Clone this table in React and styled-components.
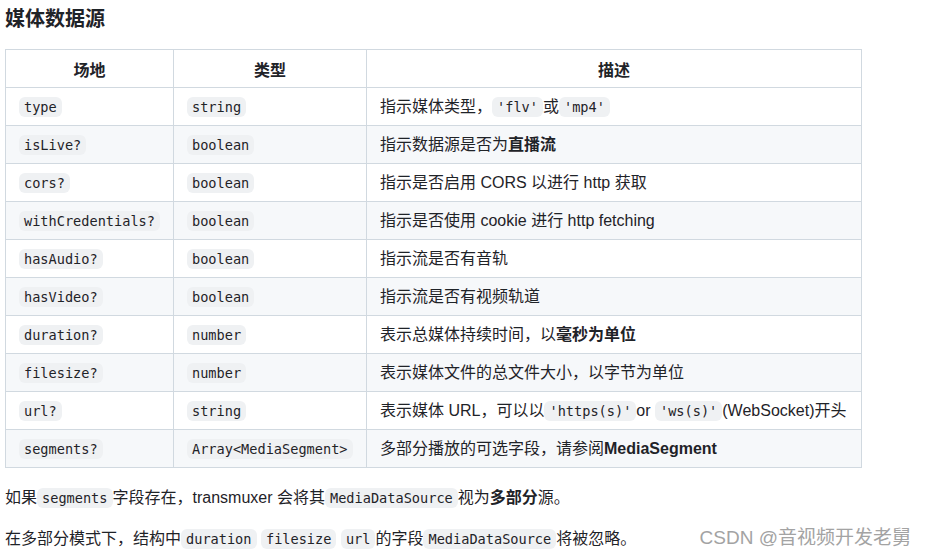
import React from 'react';
import styled, { createGlobalStyle } from 'styled-components';

const GlobalStyle = createGlobalStyle`
	body {
		margin: 0;
		background: #fff;
		color: #1f2328;
		font-family: "Liberation Sans", "Noto Sans CJK SC", sans-serif;
		font-size: 16px;
	}
`;

const Page = styled.div`
	position: relative;
	padding: 4px 5px 0;
	width: 925px;
	height: 557px;
	box-sizing: border-box;
	overflow: hidden;
`;

const Title = styled.h3`
	margin: 0 0 15px;
	font-size: 20px;
	line-height: 30px;
	font-weight: 700;
`;

const Table = styled.table`
	border-collapse: collapse;
	width: 857px;
	table-layout: fixed;
`;

const HeadCell = styled.th`
	border: 1px solid #d1d9e0;
	height: 37px;
	padding: 0 13px;
	font-weight: 700;
	text-align: center;
	background: #fff;
`;

const Row = styled.tr`
	background: ${(p) => (p.$odd ? '#f6f8fa' : '#fff')};
`;

const Cell = styled.td`
	border: 1px solid #d1d9e0;
	height: 37px;
	padding: 0 13px;
	line-height: 24px;
	white-space: nowrap;
`;

const Code = styled.code`
	font-family: "DejaVu Sans Mono", "Liberation Mono", monospace;
	font-size: 13.6px;
	padding: 2px 5px;
	background: #eff1f3;
	border-radius: 6px;
`;

const Paragraph = styled.p`
	margin: 0;
	line-height: 24px;
	padding: 8px 0 9px;
	white-space: nowrap;
`;

const Notes = styled.div`
	margin-top: 10px;
`;

const Watermark = styled.span`
	position: absolute;
	right: 14px;
	bottom: 8px;
	font-size: 19px;
	color: #a3a3a3;
	text-shadow: 0 0 1px #fff;
`;

const rows = [
	['type', 'string', <>指示媒体类型，<Code>'flv'</Code>或<Code>'mp4'</Code></>],
	['isLive?', 'boolean', <>指示数据源是否为<b>直播流</b></>],
	['cors?', 'boolean', <>指示是否启用 CORS 以进行 http 获取</>],
	['withCredentials?', 'boolean', <>指示是否使用 cookie 进行 http fetching</>],
	['hasAudio?', 'boolean', <>指示流是否有音轨</>],
	['hasVideo?', 'boolean', <>指示流是否有视频轨道</>],
	['duration?', 'number', <>表示总媒体持续时间，以<b>毫秒为单位</b></>],
	['filesize?', 'number', <>表示媒体文件的总文件大小，以字节为单位</>],
	['url?', 'string', <>表示媒体 URL，可以以<Code>'https(s)'</Code>or <Code>'ws(s)'</Code>(WebSocket)开头</>],
	['segments?', 'Array<MediaSegment>', <>多部分播放的可选字段，请参阅<b>MediaSegment</b></>],
];

export default function App() {
	return (
		<>
			<GlobalStyle />
			<Page>
				<Title>媒体数据源</Title>
				<Table>
					<colgroup>
						<col style={{ width: 168 }} />
						<col style={{ width: 193 }} />
						<col />
					</colgroup>
					<thead>
						<tr>
							<HeadCell>场地</HeadCell>
							<HeadCell>类型</HeadCell>
							<HeadCell>描述</HeadCell>
						</tr>
					</thead>
					<tbody>
						{rows.map(([field, type, desc], i) => (
							<Row key={field} $odd={i % 2 === 1}>
								<Cell><Code>{field}</Code></Cell>
								<Cell><Code>{type}</Code></Cell>
								<Cell>{desc}</Cell>
							</Row>
						))}
					</tbody>
				</Table>
				<Notes>
					<Paragraph>如果<Code>segments</Code>字段存在，transmuxer 会将其<Code>MediaDataSource</Code>视为<b>多部分</b>源。</Paragraph>
					<Paragraph>在多部分模式下，结构中<Code>duration</Code> <Code>filesize</Code> <Code>url</Code>的字段<Code>MediaDataSource</Code>将被忽略。</Paragraph>
				</Notes>
				<Watermark>CSDN @音视频开发老舅</Watermark>
			</Page>
		</>
	);
}
